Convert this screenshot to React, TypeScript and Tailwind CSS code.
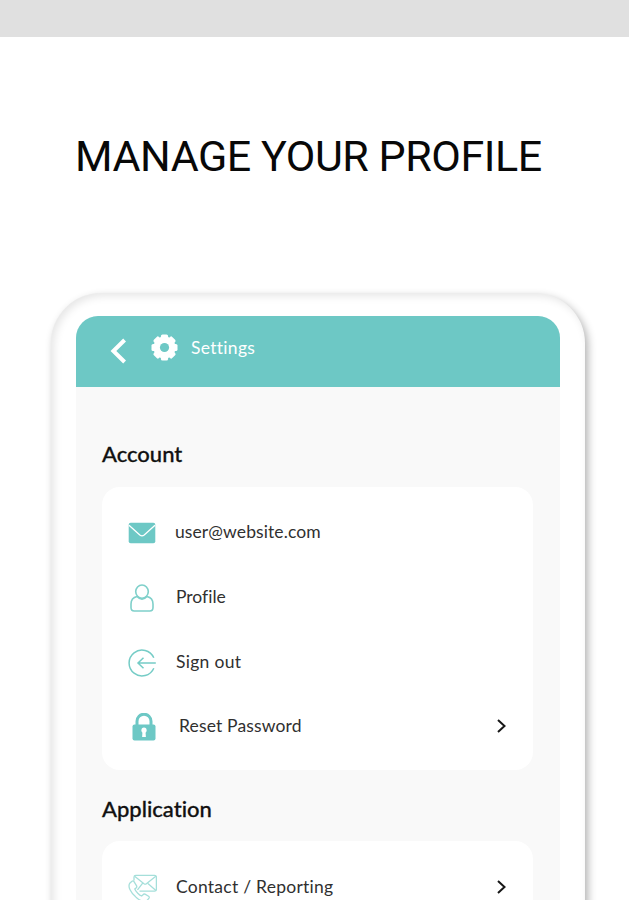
import type { ReactNode } from "react";

function BackIcon() {
  return (
    <svg className="-mt-[2px] h-[26px] w-4 shrink-0" viewBox="0 0 16 26" fill="none" stroke="white" strokeWidth="4">
      <path d="M14.6 2 3.4 13 14.6 24" />
    </svg>
  );
}

function GearIcon() {
  return (
    <svg className="size-[27px] shrink-0" viewBox="-13.5 -13.5 27 27">
      <g fill="white">
        {[0, 45, 90, 135].map((a) => (
          <rect key={a} x="-3.6" y="-13" width="7.2" height="26" rx="1.6" transform={`rotate(${a})`} />
        ))}
        <circle r="11" />
      </g>
      <circle r="4.6" fill="#6dc8c5" />
    </svg>
  );
}

function MailIcon() {
  return (
    <svg className="h-[22px] w-[28px]" viewBox="0 0 28 22">
      <rect x="0.7" y="0.7" width="26.6" height="20.6" rx="2" fill="#6dc8c5" />
      <path d="M1 3.2 11.8 13q2.2 1.8 4.4 0L27 3.2" fill="none" stroke="white" strokeWidth="1.3" />
    </svg>
  );
}

function PersonIcon() {
  return (
    <svg className="h-[28px] w-[24px]" viewBox="0 0 24 28" fill="none" stroke="#7fd0ca" strokeWidth="1.6">
      <ellipse cx="12" cy="7.6" rx="6.3" ry="6.6" />
      <path d="M7 12.5C3.2 13.4 1 16.4 1 20v3.6C1 25.8 2 27 4.2 27h15.6c2.2 0 3.2-1.2 3.2-3.4V20c0-3.6-2.2-6.6-6-7.5M7 12.5q5 5.4 10 0" />
    </svg>
  );
}

function SignOutIcon() {
  return (
    <svg className="size-[28px]" viewBox="0 0 28 28" fill="none" stroke="#75ccc6" strokeWidth="1.5">
      <path d="M25.8 8.8A12.9 12.9 0 1 0 25.8 19.2" />
      <path d="M27.8 14H10M15.5 8.7 10 14l5.5 5.3" />
    </svg>
  );
}

function LockIcon() {
  return (
    <svg className="ml-[4px] h-[28px] w-[24px]" viewBox="0 0 24 28">
      <path d="M5 13V8.2a7 7 0 0 1 14 0V13" fill="none" stroke="#6dc8c5" strokeWidth="3" />
      <rect x="0.5" y="11.5" width="23" height="16" rx="2" fill="#6dc8c5" />
      <circle cx="12" cy="17.2" r="2.6" fill="white" />
      <path d="M10.6 17.5h2.8l.5 6.5h-3.8Z" fill="white" />
    </svg>
  );
}

function ContactIcon() {
  return (
    <svg className="h-[28px] w-[29px]" viewBox="0 0 29 28" fill="none" stroke="#a5dfda" strokeWidth="1.3">
      <path d="M6 6.5V3.2Q6 1.4 7.8 1.4h18.8q1.8 0 1.8 1.8v12.2q0 1.8-1.8 1.8H11.5" />
      <path d="m6.6 2.2 9.4 7.5q1.2.9 2.4 0l9.4-7.5M9.5 15.8l5-6.4M27.9 16.6l-8-7.2" />
      <path d="M4 7.3 1.8 9.2C-.6 12.8 3 18.8 7.4 22.6c4 3.8 8.8 6 11.8 3.7l1.8-2.2q.7-1-.4-1.9L17 20.2q-1-.5-2 .5l-1.4 1.3c-2.2-.7-5.8-4.3-6.8-7l1.5-1.3q.8-.8.3-1.8L6 7.7q-.7-1.3-2-.4Z" />
    </svg>
  );
}

function ChevronIcon() {
  return (
    <svg className="-mt-[2px] ml-auto mr-[27px] h-[14px] w-[9px]" viewBox="0 0 9 14" fill="none" stroke="#171717" strokeWidth="2">
      <path d="M1 1 7.5 7 1 13" />
    </svg>
  );
}

function Row({ icon, label, spacing, chevron }: { icon: ReactNode; label: string; spacing: string; chevron?: boolean }) {
  return (
    <li className="flex h-[64.7px] items-center">
      <span className="ml-[25px] flex w-[30px] shrink-0 justify-center">{icon}</span>
      <span className={`-mt-[2px] whitespace-nowrap text-[17.5px] leading-6 text-[#303030] ${spacing}`}>{label}</span>
      {chevron && <ChevronIcon />}
    </li>
  );
}

function SectionTitle({ children }: { children: ReactNode }) {
  return <h2 className="text-[22px] font-medium leading-7 text-[#111] [-webkit-text-stroke:0.3px_#111]">{children}</h2>;
}

export default function App() {
  return (
    <div className="h-[900px] w-[629px] overflow-hidden bg-white font-['Lato',sans-serif] [font-variant-ligatures:none]">
      <div className="h-[37px] bg-[#e0e0e0]" />
      <h1 className="ml-[75px] mt-[95px] h-12 whitespace-nowrap font-['Roboto',sans-serif] text-[43px] leading-[48px] tracking-[-0.46px] text-[#080808]">
        MANAGE YOUR PROFILE
      </h1>
      <div className="ml-[51px] mt-[113px] h-[680px] w-[534px] rounded-[50px] bg-white px-[25px] pt-[23px] shadow-[3px_4px_8px_rgba(0,0,0,0.3),inset_3px_3px_8px_rgba(0,0,0,0.1)]">
        <main className="h-[640px] w-[484px] overflow-hidden rounded-t-[22px] bg-[#f9f9f9]">
          <header className="flex h-[71px] items-center bg-[#6dc8c5] pl-[34px] text-white">
            <BackIcon />
            <span className="ml-[25px] -mt-[8px]"><GearIcon /></span>
            <span className="-mt-[6px] ml-[13px] text-[17.5px] tracking-[0.3px]">Settings</span>
          </header>
          <div className="px-[26px] pt-[53px]">
            <SectionTitle>Account</SectionTitle>
            <ul className="mt-[19px] h-[283px] w-[431px] rounded-[18px] bg-white pt-[14px]">
              <Row icon={<MailIcon />} label="user@website.com" spacing="ml-[18px] tracking-[0.1px]" />
              <Row icon={<PersonIcon />} label="Profile" spacing="ml-[19px]" />
              <Row icon={<SignOutIcon />} label="Sign out" spacing="ml-[19px] tracking-[0.3px]" />
              <Row icon={<LockIcon />} label="Reset Password" spacing="ml-[22px] tracking-[0.15px]" chevron />
            </ul>
            <div className="mt-[25px]"><SectionTitle>Application</SectionTitle></div>
            <ul className="mt-[18px] h-[200px] w-[431px] rounded-[18px] bg-white pt-[15px]">
              <Row icon={<ContactIcon />} label="Contact / Reporting" spacing="ml-[19px] tracking-[0.25px]" chevron />
            </ul>
          </div>
        </main>
      </div>
    </div>
  );
}
